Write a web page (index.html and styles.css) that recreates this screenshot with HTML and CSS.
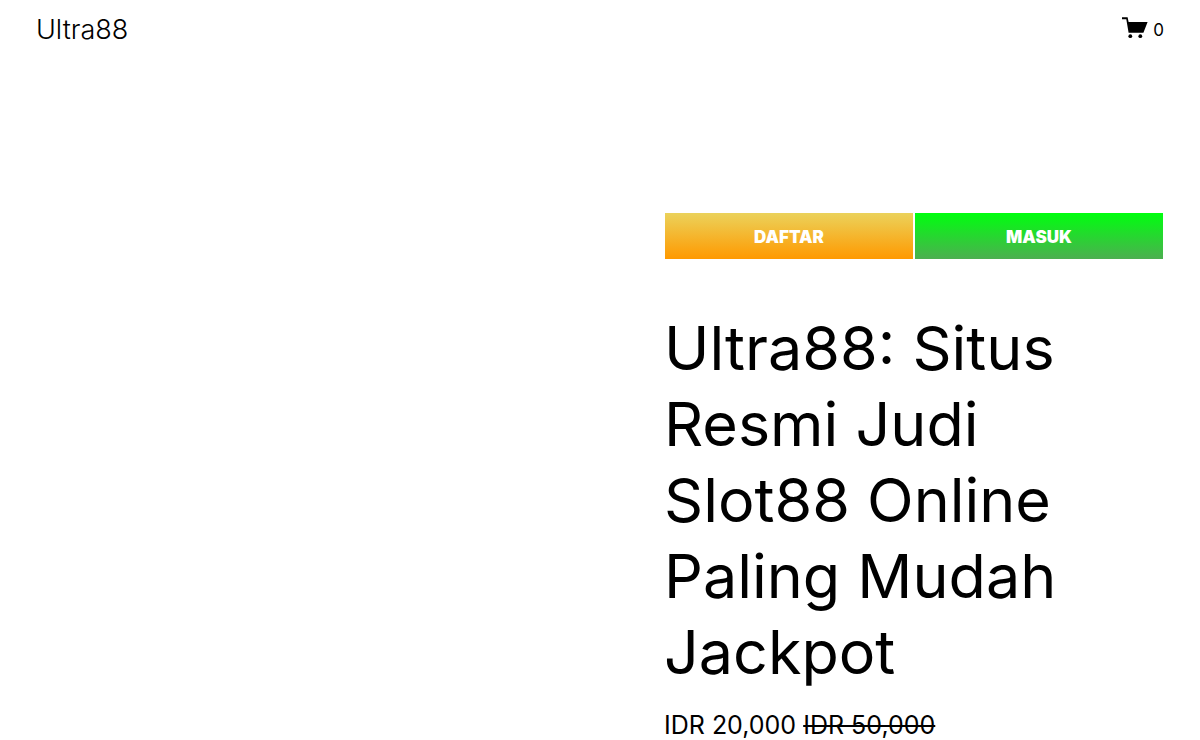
FILE: index.html
```
<!DOCTYPE html>
<html lang="id">
<head>
<meta charset="UTF-8" />
<meta name="viewport" content="width=device-width, initial-scale=1.0"/>
<title>Ultra88: Situs Resmi Judi Slot88 Online Paling Mudah Jackpot</title>
<link rel="stylesheet" href="styles.css">
</head>
<body>
<header class="header">
<a href="/" class="site-title">Ultra88</a>
<a href="/cart" class="cart" aria-label="Cart, 0 items">
<svg class="cart-icon" viewBox="0 0 26 22" aria-hidden="true">
<path d="M0 0.3H5.6L6.6 5H25.6L21.4 15.8H6.6L4.3 2.2H0Z"/>
<circle cx="8.3" cy="19.2" r="1.9"/>
<circle cx="18.3" cy="19.2" r="1.9"/>
</svg>
<span class="cart-count">0</span>
</a>
</header>

<main class="product">
<div class="gallery"></div>

<div class="details">
<div class="actions">
<button type="button" class="btn daftar">DAFTAR</button>
<button type="button" class="btn masuk">MASUK</button>
</div>
<h1>Ultra88: Situs Resmi Judi Slot88 Online Paling Mudah Jackpot</h1>
<p class="price">IDR 20,000 <del>IDR 50,000</del></p>
</div>
</main>
</body>
</html>
```

FILE: styles.css
```
* {
box-sizing: border-box;
margin: 0;
padding: 0;
}

body {
font-family: Inter, "Liberation Sans", sans-serif;
background: #fff;
color: #000;
}

.header {
display: flex;
justify-content: space-between;
align-items: center;
height: 60px;
padding: 0 36px;
}

.header a {
color: #000;
text-decoration: none;
}

.site-title {
font-size: 27px;
font-weight: 300;
line-height: 32px;
}

.cart {
display: flex;
align-items: center;
gap: 5px;
}

.cart-icon {
width: 26px;
height: 22px;
margin-bottom: 4px;
}

.cart-count {
font-size: 17px;
}

.product {
display: grid;
grid-template-columns: 1fr 1fr;
gap: 128px;
padding: 152px 36px 0;
}

.actions {
display: grid;
grid-template-columns: 1fr 1fr;
gap: 2px;
padding: 0 1px;
margin-bottom: 50px;
}

.btn {
height: 48px;
padding-top: 2px;
border: 1px solid #fff;
border-width: 1px 0;
color: #fff;
font-family: inherit;
font-size: 17px;
font-weight: 900;
cursor: pointer;
}

.daftar {
background: linear-gradient(to bottom, #ebd25b, #ff9900);
}

.masuk {
background: linear-gradient(to bottom, #00ff0f, #4caf50);
}

h1 {
font-size: 61px;
font-weight: 400;
line-height: 76px;
}

.price {
margin-top: 19px;
font-size: 25px;
font-weight: 400;
line-height: 32px;
}
```
